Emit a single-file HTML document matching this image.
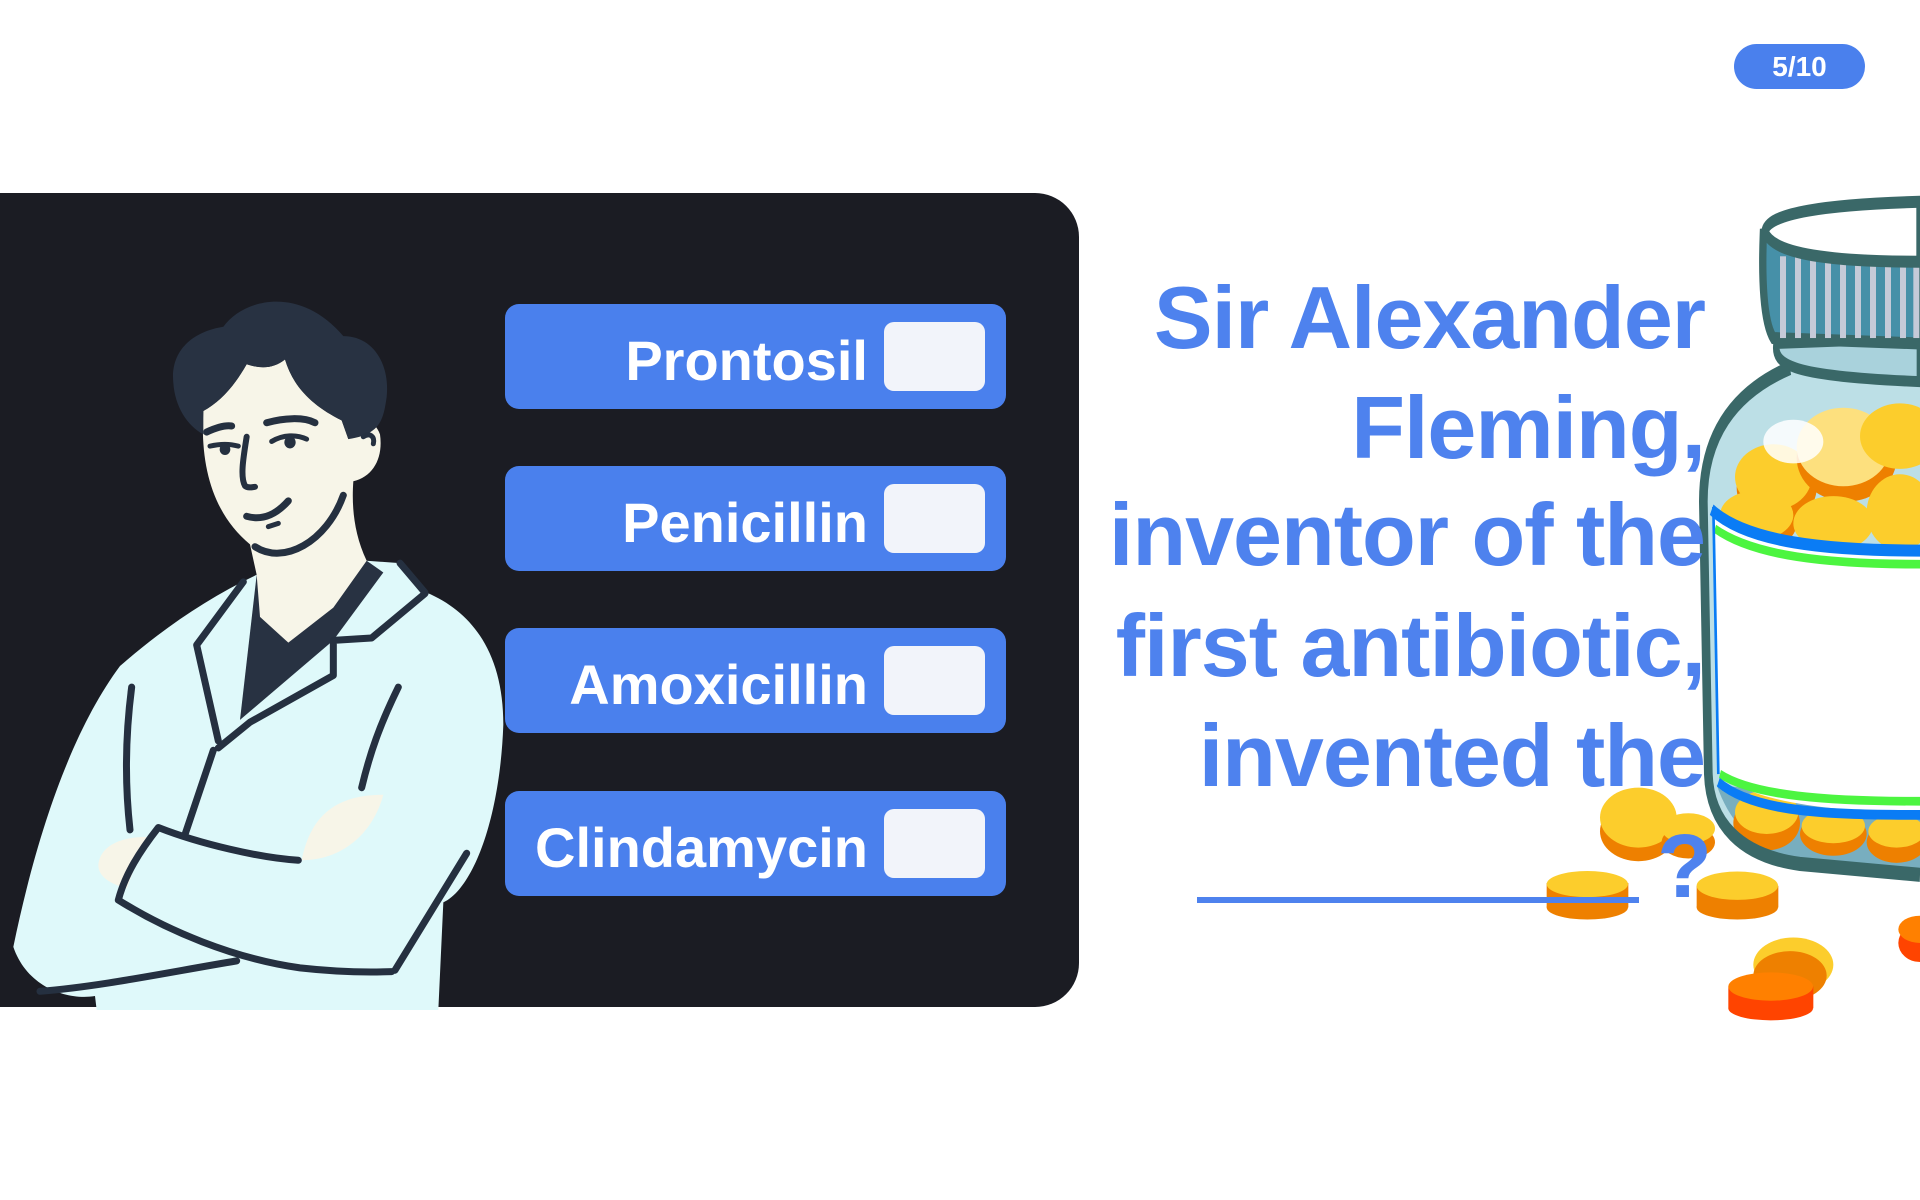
<!DOCTYPE html>
<html><head><meta charset="utf-8"><style>
html,body{margin:0;padding:0;width:1920px;height:1200px;overflow:hidden;background:#fff;font-family:"Liberation Sans",sans-serif}
.panel{position:absolute;left:-50px;top:193px;width:1129px;height:814px;background:#1b1c23;border-radius:44px}
.btn{position:absolute;left:505px;width:501px;height:105px;background:#4a80ed;border-radius:14px}
.btn .t{position:absolute;right:138px;top:29px;font-size:56px;line-height:55px;font-weight:bold;color:#fff;white-space:nowrap}
.btn .c{position:absolute;left:379px;top:18px;width:101px;height:69px;background:#f2f4fa;border-radius:10px}
.ln{position:absolute;right:215px;font-size:88px;line-height:87px;font-weight:bold;color:#4e82ee;white-space:nowrap;letter-spacing:-1px}
.badge{position:absolute;left:1734px;top:44px;width:131px;height:45px;border-radius:23px;background:#4a80ed;color:#fff;font-weight:bold;font-size:28px;line-height:45px;text-align:center}
svg{position:absolute;left:0;top:0}
</style></head><body>
<div class="panel"></div>
<div class="badge">5/10</div>

<svg width="1920" height="1200" viewBox="0 0 1920 1200">
<g transform="translate(0,280) scale(0.33333,0.46795)" stroke="#253040" stroke-linecap="round" stroke-linejoin="round" fill="none">
 <path d="M40,1425 C120,1150 230,950 360,825 C480,750 620,680 770,630 L1100,600 L1200,605 L1280,668 C1420,710 1510,800 1510,950 C1500,1150 1420,1300 1330,1330 L1315,1560 L290,1560 L285,1530 C200,1540 80,1510 40,1425 Z" fill="#dff9fa" stroke="none"/>
 <path d="M770,630 L720,940 L1000,770 L1150,625 L1100,600 Z" fill="#283242" stroke="none"/>
 <path d="M610,280 C600,400 640,500 750,565 L770,630 L780,720 L865,775 L1000,700 L1100,600 C1060,540 1055,480 1060,430 C1120,420 1150,380 1140,330 C1120,290 1070,300 1045,340 L1025,300 C940,270 880,230 855,170 C820,190 780,190 740,180 C700,230 660,260 610,280 Z" fill="#f7f5e8" stroke="none"/>
 <path d="M520,220 C510,150 580,110 670,100 C730,40 900,10 1030,120 C1120,120 1170,180 1160,250 C1150,300 1140,330 1045,340 L1025,300 C940,270 880,230 855,170 C820,190 780,190 740,180 C700,230 660,260 610,280 L610,330 C560,310 525,270 520,220 Z" fill="#283242" stroke="none"/>
 <path d="M905,1240 C930,1150 1000,1100 1150,1100 C1120,1180 1030,1240 905,1240 Z" fill="#f7f5e8" stroke="none"/>
 <path d="M295,1250 C300,1210 360,1190 440,1190 L380,1300 C330,1290 295,1275 295,1250 Z" fill="#f7f5e8" stroke="none"/>
 <path vector-effect="non-scaling-stroke" stroke-width="7" d="M730,645 L590,780 L655,985"/>
 <path vector-effect="non-scaling-stroke" stroke-width="7" d="M655,1000 L750,945 L1000,845 L1000,770 L1115,765 L1275,670"/>
 <path vector-effect="non-scaling-stroke" stroke-width="7" d="M1200,605 L1275,668"/>
 <path vector-effect="non-scaling-stroke" stroke-width="7" d="M640,1005 L555,1185"/>
 <path vector-effect="non-scaling-stroke" stroke-width="7" d="M395,870 C375,980 375,1080 390,1175"/>
 <path vector-effect="non-scaling-stroke" stroke-width="7" d="M1195,870 C1140,950 1110,1010 1085,1085"/>
 <path vector-effect="non-scaling-stroke" stroke-width="7" d="M895,1240 C780,1235 600,1205 475,1170 C420,1220 375,1270 355,1325 C500,1390 700,1450 900,1470 C1000,1478 1100,1480 1175,1478"/>
 <path vector-effect="non-scaling-stroke" stroke-width="7" d="M1185,1475 L1400,1225"/>
 <path vector-effect="non-scaling-stroke" stroke-width="7" d="M120,1520 C300,1510 500,1480 710,1455"/>
 <path vector-effect="non-scaling-stroke" stroke-width="7" d="M620,325 C650,315 675,310 695,312"/>
 <path vector-effect="non-scaling-stroke" stroke-width="7" d="M800,305 C850,295 910,292 945,305"/>
 <path vector-effect="non-scaling-stroke" stroke-width="5" d="M630,355 C660,350 690,350 715,355"/>
 <path vector-effect="non-scaling-stroke" stroke-width="5" d="M815,345 C850,330 890,330 920,340"/>
 <path vector-effect="non-scaling-stroke" stroke-width="6" d="M740,335 C730,380 720,420 735,440 C745,445 755,443 765,442"/>
 <path vector-effect="non-scaling-stroke" stroke-width="7" d="M740,505 C790,515 830,500 865,472"/>
 <path vector-effect="non-scaling-stroke" stroke-width="5" d="M805,527 L835,520"/>
 <path vector-effect="non-scaling-stroke" stroke-width="7" d="M765,570 C850,610 980,560 1030,460"/>
 <path vector-effect="non-scaling-stroke" stroke-width="5" d="M1090,335 C1110,325 1125,335 1120,350"/>
 <ellipse cx="675" cy="362" rx="16" ry="12" fill="#253040" stroke="none"/>
 <ellipse cx="870" cy="347" rx="17" ry="13" fill="#253040" stroke="none"/>
</g>

<g transform="translate(1560,180) scale(0.33333,0.54496)">
 <path d="M690,345 C520,390 430,470 430,590 L445,1090 C450,1180 540,1240 720,1255 L1080,1275 L1080,340 Z" fill="#bcdfe6"/>
 <path d="M470,1110 C520,1200 620,1240 760,1255 L1080,1270 L1080,1150 Z" fill="#78aebf"/>
 <g>
  <ellipse cx="650" cy="565" rx="120" ry="65" fill="#ee8000"/><ellipse cx="640" cy="545" rx="115" ry="60" fill="#fccd2c"/>
  <ellipse cx="860" cy="510" rx="150" ry="80" fill="#ee8000"/><ellipse cx="850" cy="490" rx="140" ry="72" fill="#fde07e"/>
  <ellipse cx="1020" cy="470" rx="120" ry="60" fill="#fccd2c"/>
  <ellipse cx="590" cy="630" rx="120" ry="50" fill="#ee8000"/><ellipse cx="590" cy="615" rx="110" ry="45" fill="#fccd2c"/>
  <ellipse cx="820" cy="630" rx="120" ry="50" fill="#fccd2c"/>
  <ellipse cx="1020" cy="610" rx="100" ry="70" fill="#fccd2c"/>
  <ellipse cx="700" cy="480" rx="90" ry="40" fill="#fff" opacity="0.85"/>
  <ellipse cx="620" cy="1180" rx="100" ry="50" fill="#ee8000"/><ellipse cx="620" cy="1160" rx="95" ry="40" fill="#fccd2c"/>
  <ellipse cx="820" cy="1200" rx="100" ry="40" fill="#ee8000"/><ellipse cx="820" cy="1185" rx="95" ry="32" fill="#fccd2c"/>
  <ellipse cx="1010" cy="1215" rx="90" ry="38" fill="#ee8000"/><ellipse cx="1010" cy="1195" rx="85" ry="30" fill="#fccd2c"/>
 </g>
 <path d="M460,600 C550,660 800,690 1080,690 L1080,1160 C800,1160 560,1140 475,1085 Z" fill="#fff"/>
 <path d="M455,605 C560,665 800,680 1080,680" stroke="#0a7cf5" stroke-width="22" fill="none"/>
 <path d="M465,640 C580,690 800,705 1080,705" stroke="#4cf540" stroke-width="16" fill="none"/>
 <path d="M480,1090 C580,1130 800,1140 1080,1140" stroke="#4cf540" stroke-width="16" fill="none"/>
 <path d="M475,1105 C580,1160 800,1165 1080,1165" stroke="#0a7cf5" stroke-width="18" fill="none"/>
 <path d="M460,600 L475,1090" stroke="#0a7cf5" stroke-width="8" fill="none"/>
 <path d="M690,345 C520,390 430,470 430,590 L445,1090 C450,1180 540,1240 720,1255 L1080,1275" stroke="#3a6868" stroke-width="26" fill="none"/>
 <path d="M650,300 C640,340 690,360 1080,370 L1080,290 Z" fill="#a9d2dc" stroke="#3a6868" stroke-width="20"/>
 <path d="M610,100 L1080,80 L1080,300 L640,290 C610,260 605,180 610,100 Z" fill="#4690a8" stroke="#3a6868" stroke-width="22"/>
 <g fill="#c5cad8">
  <rect x="660" y="140" width="18" height="150"/><rect x="705" y="140" width="18" height="150"/><rect x="750" y="140" width="18" height="150"/><rect x="795" y="140" width="18" height="150"/><rect x="840" y="140" width="18" height="150"/><rect x="885" y="140" width="18" height="150"/><rect x="930" y="140" width="18" height="150"/><rect x="975" y="140" width="18" height="150"/><rect x="1020" y="140" width="18" height="150"/><rect x="1060" y="140" width="18" height="150"/>
 </g>
 <path d="M615,95 C620,60 800,45 1080,40 L1080,150 C850,150 640,140 615,95 Z" fill="#fff" stroke="#3a6868" stroke-width="22"/>
 <g>
  <ellipse cx="235" cy="1195" rx="115" ry="55" fill="#ee8000"/><ellipse cx="235" cy="1170" rx="115" ry="55" fill="#fccd2c"/>
  <ellipse cx="385" cy="1215" rx="80" ry="30" fill="#ee8000"/><ellipse cx="385" cy="1190" rx="80" ry="28" fill="#fccd2c"/>
  <rect x="-40" y="1290" width="245" height="45" fill="#ee8000"/><ellipse cx="82" cy="1335" rx="122" ry="22" fill="#ee8000"/><ellipse cx="82" cy="1292" rx="122" ry="24" fill="#fccd2c"/>
  <rect x="410" y="1295" width="245" height="40" fill="#ee8000"/><ellipse cx="532" cy="1335" rx="122" ry="22" fill="#ee8000"/><ellipse cx="532" cy="1295" rx="122" ry="26" fill="#fccd2c"/>
  <ellipse cx="700" cy="1440" rx="120" ry="50" fill="#fccd2c"/><ellipse cx="690" cy="1460" rx="110" ry="45" fill="#ee8000"/>
  <rect x="505" y="1480" width="255" height="40" fill="#ff4400"/><ellipse cx="632" cy="1520" rx="127" ry="22" fill="#ff4400"/><ellipse cx="632" cy="1480" rx="127" ry="26" fill="#ff8000"/>
  <ellipse cx="1080" cy="1400" rx="65" ry="35" fill="#ff4400"/><ellipse cx="1080" cy="1375" rx="65" ry="25" fill="#ff8000"/>
 </g>
</g>
</svg>

<div class="btn" style="top:304px"><span class="t">Prontosil</span><span class="c"></span></div>
<div class="btn" style="top:466px"><span class="t">Penicillin</span><span class="c"></span></div>
<div class="btn" style="top:628px"><span class="t">Amoxicillin</span><span class="c"></span></div>
<div class="btn" style="top:791px"><span class="t">Clindamycin</span><span class="c"></span></div>

<div class="ln" style="top:274px">Sir Alexander</div>
<div class="ln" style="top:384px">Fleming,</div>
<div class="ln" style="top:491px">inventor of the</div>
<div class="ln" style="top:602px">first antibiotic,</div>
<div class="ln" style="top:712px">invented the</div>
<div style="position:absolute;left:1197px;top:897px;width:442px;height:6px;background:#4e82ee"></div>
<div style="position:absolute;left:1657px;top:822px;font-size:90px;line-height:90px;font-weight:bold;color:#4e82ee">?</div>
</body></html>
